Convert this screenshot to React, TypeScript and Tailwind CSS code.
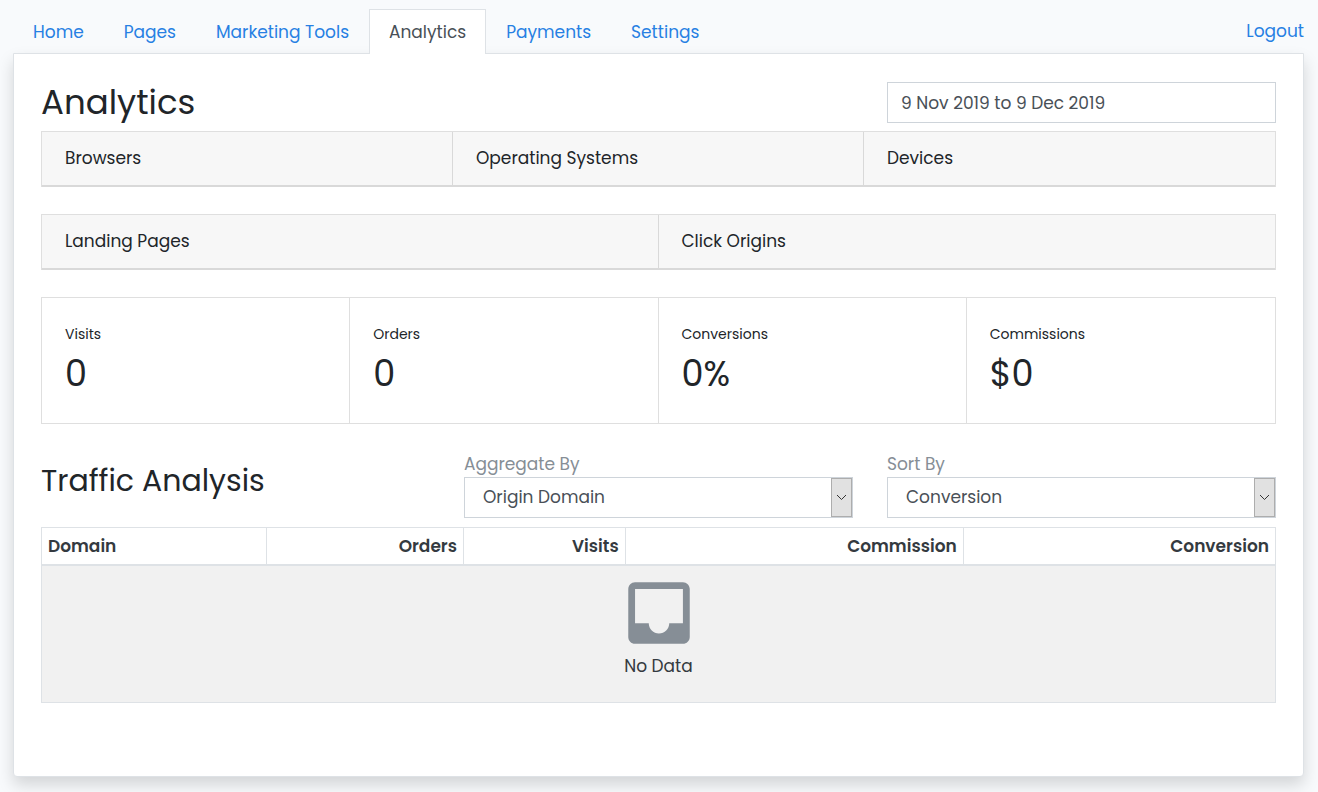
import type { ReactNode } from "react";

type Tab = { label: string; active?: boolean };

const tabs: Tab[] = [
  { label: "Home" },
  { label: "Pages" },
  { label: "Marketing Tools" },
  { label: "Analytics", active: true },
  { label: "Payments" },
  { label: "Settings" },
];

const stats = [
  { label: "Visits", value: "0" },
  { label: "Orders", value: "0" },
  { label: "Conversions", value: "0%" },
  { label: "Commissions", value: "$0" },
];

const columns = [
  { label: "Domain", style: "w-[18.2%] text-left" },
  { label: "Orders", style: "w-[16%] text-right" },
  { label: "Visits", style: "w-[13.1%] text-right" },
  { label: "Commission", style: "w-[27.4%] text-right" },
  { label: "Conversion", style: "w-[25.3%] text-right" },
];

function PanelHeader({ children }: { children: ReactNode }) {
  return (
    <h2 className="border-b-2 border-[#d9d9d9] bg-[#f7f7f7] px-[23px] py-[13px] leading-[27px]">
      {children}
    </h2>
  );
}

function SelectField({ id, label, options }: { id: string; label: string; options: string[] }) {
  return (
    <div>
      <label htmlFor={id} className="block leading-[26px] text-[#868e96]">
        {label}
      </label>
      <div className="relative">
        <select
          id={id}
          className="block h-[41px] w-full appearance-none border border-[#ced4da] bg-white pr-8 pl-[18px] text-[#495057]"
        >
          {options.map((option) => (
            <option key={option}>{option}</option>
          ))}
        </select>
        <span className="pointer-events-none absolute inset-y-px right-px flex w-[21px] items-center justify-center border border-[#adadad] bg-[#e1e1e1]">
          <svg width="11" height="7" viewBox="0 0 11 7" fill="none" stroke="#333" aria-hidden="true">
            <path d="M1 1l4.5 4.5L10 1" />
          </svg>
        </span>
      </div>
    </div>
  );
}

export default function App() {
  return (
    <div className="min-h-screen bg-[#f8fafc] pt-[9px] pr-[14px] pb-[15px] pl-[13px] font-['Poppins','Inter',sans-serif] text-[17px] text-[#212529]">
      <header className="flex items-start justify-between">
        <nav className="relative z-10 -mb-px flex">
          {tabs.map((tab) => (
            <a
              key={tab.label}
              href="#"
              className={
                tab.active
                  ? "border border-b-0 border-[#dee2e6] bg-white px-[19px] pt-[9px] pb-[8px] leading-[27px] text-[#495057]"
                  : "border border-b-0 border-transparent px-[19px] pt-[9px] pb-[7px] leading-[27px] text-[#2780e3]"
              }
            >
              {tab.label}
            </a>
          ))}
        </nav>
        <a href="#" className="pt-[9px] leading-[27px] text-[#2780e3]">
          Logout
        </a>
      </header>

      <main className="rounded-b border border-[#dee2e6] bg-white px-[27px] pt-7 pb-[73px] shadow-[0_8px_16px_rgba(0,0,0,0.15)]">
        <div className="grid grid-cols-3 gap-x-[34px]">
          <h1 className="col-span-2 text-[34px] leading-[41px]">Analytics</h1>
          <input
            type="text"
            aria-label="Date range"
            defaultValue="9 Nov 2019 to 9 Dec 2019"
            className="h-[41px] w-full border border-[#ced4da] bg-white px-[13px] text-[#495057]"
          />
        </div>

        <section className="mt-2 grid grid-cols-3 divide-x divide-[#dfdfdf] border border-b-0 border-[#dfdfdf]">
          <PanelHeader>Browsers</PanelHeader>
          <PanelHeader>Operating Systems</PanelHeader>
          <PanelHeader>Devices</PanelHeader>
        </section>

        <section className="mt-[27px] grid grid-cols-2 divide-x divide-[#dfdfdf] border border-b-0 border-[#dfdfdf]">
          <PanelHeader>Landing Pages</PanelHeader>
          <PanelHeader>Click Origins</PanelHeader>
        </section>

        <dl className="mt-[27px] grid grid-cols-4 divide-x divide-[#dfdfdf] border border-[#dfdfdf]">
          {stats.map((stat) => (
            <div key={stat.label} className="px-[23px] pt-6 pb-[25px]">
              <dt className="text-[14px] leading-6">{stat.label}</dt>
              <dd className="mt-1 text-[35px] leading-[48px]">{stat.value}</dd>
            </div>
          ))}
        </dl>

        <div className="mt-[27px] grid grid-cols-3 gap-x-[34px]">
          <h2 className="pt-[9px] text-[30px] leading-[42px]">Traffic Analysis</h2>
          <SelectField
            id="aggregate-by"
            label="Aggregate By"
            options={["Origin Domain", "Landing Page", "Campaign"]}
          />
          <SelectField id="sort-by" label="Sort By" options={["Conversion", "Visits", "Orders", "Commission"]} />
        </div>

        <table className="mt-[9px] w-full table-fixed border-collapse border border-[#dee2e6] text-[#343a40]">
          <thead>
            <tr>
              {columns.map((column) => (
                <th
                  key={column.label}
                  scope="col"
                  className={`${column.style} border border-b-2 border-[#dee2e6] px-[6px] pt-[5px] pb-[4px] leading-[27px] font-semibold`}
                >
                  {column.label}
                </th>
              ))}
            </tr>
          </thead>
          <tbody>
            <tr>
              <td colSpan={5} className="bg-[#f1f1f1] px-[6px] pt-[6px] pb-[23px] text-center">
                <svg viewBox="0 0 24 24" className="mx-auto block size-[82px] fill-[#868e96]" aria-hidden="true">
                  <path d="M19 3H4.99C3.88 3 3.01 3.89 3.01 5L3 19c0 1.1.88 2 1.99 2H19c1.1 0 2-.9 2-2V5c0-1.11-.9-2-2-2zm0 12h-4c0 1.66-1.35 3-3 3s-3-1.34-3-3H4.99V5H19v10z" />
                </svg>
                <p className="leading-[25px]">No Data</p>
              </td>
            </tr>
          </tbody>
        </table>
      </main>
    </div>
  );
}
